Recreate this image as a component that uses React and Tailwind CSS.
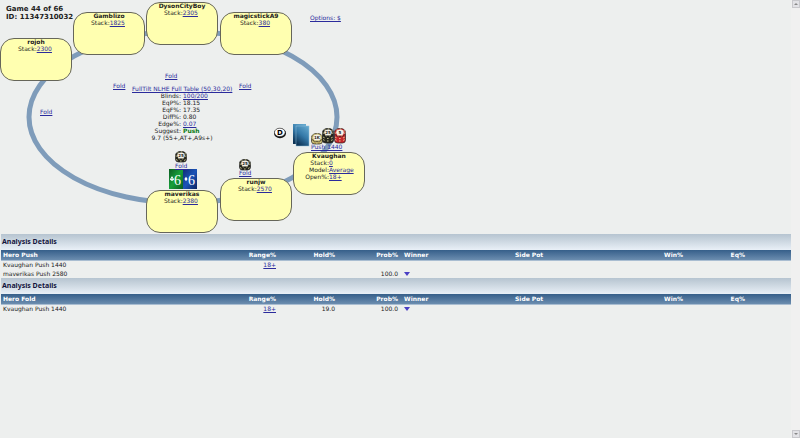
const seats = [
  { name: "rojoh", pos: "left-0 top-[38px]", rows: [["Stack:", "2300"]] },
  { name: "Gamblizo", pos: "left-[73px] top-3", rows: [["Stack:", "1825"]] },
  { name: "DysonCityBoy", pos: "left-[146px] top-0.5", rows: [["Stack:", "2305"]] },
  { name: "magicstickA9", pos: "left-[220px] top-3", rows: [["Stack:", "380"]] },
  { name: "Kvaughan", pos: "left-[293px] top-[152px]", rows: [["Stack:", "0"], ["Model:", "Average"], ["Open%:", "18+"]] },
  { name: "runjw", pos: "left-[220px] top-[178px]", rows: [["Stack:", "2570"]] },
  { name: "maverikas", pos: "left-[146px] top-[190px]", rows: [["Stack:", "2380"]] },
]

const actions = [
  { label: "Fold", pos: "left-[40px] top-[108px]" },
  { label: "Fold", pos: "left-[113px] top-[82px]" },
  { label: "Fold", pos: "left-[165px] top-[72px]" },
  { label: "Fold", pos: "left-[239px] top-[82px]" },
  { label: "Push 1440", pos: "left-[311px] top-[143px]" },
  { label: "Fold", pos: "left-[239px] top-[169px]" },
  { label: "Fold", pos: "left-[175px] top-[162px]" },
]

const stats = [
  ["Blinds:", "100/200", "link"],
  ["EqP%:", "18.15"],
  ["EqF%:", "17.35"],
  ["Diff%:", "0.80"],
  ["Edge%:", "0.07", "link"],
  ["Suggest:", "Push", "good"],
]

const tables = [
  {
    hero: "Hero Push",
    rows: [
      { action: "Kvaughan Push 1440", range: "18+" },
      { action: "maverikas Push 2580", prob: "100.0" },
    ],
  },
  {
    hero: "Hero Fold",
    rows: [{ action: "Kvaughan Push 1440", range: "18+", hold: "19.0", prob: "100.0" }],
  },
]

function Link({ children, className = "" }) {
  return <a href="#" className={`text-[#2b2b9c] underline ${className}`}>{children}</a>
}

function Seat({ name, pos, rows }) {
  return (
    <div className={`absolute ${pos} h-[43px] w-[72px] rounded-[14px] border border-[#66665a] bg-[#ffffb0] text-center`}>
      <div className="font-bold leading-[6px]">{name}</div>
      {rows.length === 1 ? (
        <div className="pr-0.5 leading-[7px]">{rows[0][0]}<Link>{rows[0][1]}</Link></div>
      ) : (
        rows.map(([label, value]) => (
          <div key={label} className="flex leading-[7px]">
            <span className="w-[35px] text-right">{label}</span>
            <Link>{value}</Link>
          </div>
        ))
      )}
    </div>
  )
}

function ChipStack({ pos, color, label, tall }) {
  return (
    <svg className={`absolute ${pos}`} width="12" height={tall ? 16 : 12} viewBox={tall ? "0 0 12 16" : "0 0 12 12"}>
      <rect x="0.5" y="4" width="11" height={tall ? 11 : 7} rx="3" fill={color} stroke="#222" strokeWidth="0.7" />
      {(tall ? [9, 11.5] : [8.5]).map((y) => (
        <path key={y} d={`M1 ${y}q5 3 10 0`} fill="none" stroke="#e8e4a0" strokeWidth="0.9" strokeDasharray="1.6 2.6" />
      ))}
      <ellipse cx="6" cy="4.5" rx="5.6" ry="4.2" fill={color} stroke="#222" strokeWidth="0.6" />
      <ellipse cx="6" cy="4.5" rx="4.9" ry="3.6" fill="none" stroke="#e8e4a0" strokeWidth="0.8" strokeDasharray="1.5 2.4" />
      <ellipse cx="6" cy="4.5" rx="3.8" ry="2.9" fill="#f4f2e8" />
      <text x="6" y="6" textAnchor="middle" fontSize="4" fontWeight="bold" fill="#222">{label}</text>
    </svg>
  )
}

function PokerTable() {
  return (
    <div className="relative h-[234px] leading-[7px]">
      <svg className="absolute left-0 top-0" width="366" height="234" viewBox="0 0 366 234">
        <ellipse cx="183" cy="117" rx="154" ry="86" fill="none" stroke="#7f9cba" strokeWidth="5" />
      </svg>

      <div className="absolute left-1.5 top-[5px] text-[7px] font-bold leading-[8px]">
        <div>Game 44 of 66</div>
        <div>ID: 11347310032</div>
      </div>
      <Link className="absolute left-[310px] top-[14px]">Options: $</Link>

      {seats.map((seat) => (
        <Seat key={seat.name} {...seat} />
      ))}

      <div className="absolute left-[132px] top-[85px] w-[100px] whitespace-nowrap">
        <Link>FullTilt NLHE Full Table (50,30,20)</Link>
        {stats.map(([label, value, kind]) => (
          <div key={label} className="flex gap-0.5">
            <span className="w-[49px] text-right">{label}</span>
            {kind === "link" ? <Link>{value}</Link> : (
              <span className={kind === "good" ? "font-bold text-[#087a12]" : ""}>{value}</span>
            )}
          </div>
        ))}
        <div className="text-center">9.7 (55+,AT+,A9s+)</div>
      </div>

      {/* dealer button */}
      <svg className="absolute left-[273px] top-[127px]" width="14" height="12" viewBox="0 0 14 12">
        <ellipse cx="7" cy="6.3" rx="6" ry="5" fill="#111" />
        <ellipse cx="6.8" cy="5.4" rx="5.3" ry="4.2" fill="#fff" stroke="#333" strokeWidth="0.6" />
        <text x="6.8" y="8" textAnchor="middle" fontSize="7" fontWeight="bold" fill="#000">D</text>
      </svg>

      {/* face down cards */}
      <svg className="absolute left-[292px] top-[123px]" width="18" height="24" viewBox="0 0 18 24">
        <defs>
          <linearGradient id="back" x1="0.8" y1="0" x2="0.3" y2="1">
            <stop offset="0" stopColor="#62a6cc" />
            <stop offset="0.5" stopColor="#3579a8" />
            <stop offset="1" stopColor="#0e3456" />
          </linearGradient>
        </defs>
        <rect x="1" y="1" width="13" height="20" fill="url(#back)" />
        <rect x="4" y="3" width="13" height="20" fill="url(#back)" stroke="#8fc0dc" strokeWidth="0.5" />
      </svg>

      <ChipStack pos="left-[311px] top-[133px]" color="#b8a45c" label="1K" />
      <ChipStack pos="left-[322px] top-[128px]" color="#27271f" label="25" tall />
      <ChipStack pos="left-[334px] top-[128px]" color="#c8262c" label="5" tall />
      <ChipStack pos="left-[175px] top-[151px]" color="#27271f" label="25" />
      <ChipStack pos="left-[239px] top-[159px]" color="#27271f" label="25" />

      {/* maverikas hole cards */}
      <svg className="absolute left-[169px] top-[169px]" width="28" height="20" viewBox="0 0 28 20">
        <defs>
          <linearGradient id="club" x1="0" y1="0" x2="1" y2="1">
            <stop offset="0" stopColor="#0b5c22" />
            <stop offset="0.5" stopColor="#18a03a" />
            <stop offset="1" stopColor="#0c5a20" />
          </linearGradient>
          <linearGradient id="diamond" x1="0" y1="0" x2="1" y2="1">
            <stop offset="0" stopColor="#102c74" />
            <stop offset="0.5" stopColor="#1c54b8" />
            <stop offset="1" stopColor="#0c2360" />
          </linearGradient>
        </defs>
        <rect width="14" height="20" fill="url(#club)" />
        <rect x="14" width="14" height="20" fill="url(#diamond)" />
        <g fill="#fff">
          <g>
            <circle cx="3" cy="8.6" r="1" />
            <circle cx="2" cy="10.2" r="1" />
            <circle cx="4" cy="10.2" r="1" />
            <path d="M3 9.5l0.8 2.6H2.2z" />
          </g>
          <path d="M17 7.8l1.6 2.2-1.6 2.2-1.6-2.2z" />
          <text x="5" y="16" fontFamily="Liberation Serif, serif" fontSize="14">6</text>
          <text x="19" y="16" fontFamily="Liberation Serif, serif" fontSize="14">6</text>
        </g>
      </svg>

      {actions.map((a) => (
        <Link key={a.pos} className={`absolute ${a.pos} whitespace-nowrap`}>{a.label}</Link>
      ))}
    </div>
  )
}

function AnalysisTable({ hero, rows }) {
  return (
    <section>
      <h2 className="h-4 bg-linear-to-b from-[#b6c4d0] to-[#e9f0f7] px-px font-['Noto_Sans',sans-serif] text-[7px] font-bold leading-[16px] text-[#14143c]">
        Analysis Details
      </h2>
      <table className="w-full table-fixed border-separate border-spacing-0 text-left">
        <colgroup>
          <col className="w-[218px]" />
          <col className="w-[59px]" />
          <col className="w-[59px]" />
          <col className="w-[63px]" />
          <col className="w-[113px]" />
          <col className="w-[110px]" />
          <col className="w-[62px]" />
          <col className="w-[62px]" />
          <col />
        </colgroup>
        <thead className="bg-linear-to-b from-[#365f8a] to-[#7192b3] text-white">
          <tr className="h-[11px] leading-[10px] *:border-b *:border-[#a9bdd1] *:px-0.5">
            <th>{hero}</th>
            <th className="text-right">Range%</th>
            <th className="text-right">Hold%</th>
            <th className="text-right">Prob%</th>
            <th>&nbsp;Winner</th>
            <th>Side Pot</th>
            <th className="text-right">Win%</th>
            <th className="text-right">Eq%</th>
            <th></th>
          </tr>
        </thead>
        <tbody>
          {rows.map((row) => (
            <tr key={row.action} className="leading-[8px] *:px-0.5 not-first:*:pt-px">
              <td>{row.action}</td>
              <td className="text-right">{row.range && <Link>{row.range}</Link>}</td>
              <td className="text-right">{row.hold}</td>
              <td className="text-right">{row.prob}</td>
              <td>
                {row.prob && (
                  <button aria-label="Show winners" className="ml-0.5 block">
                    <svg width="6" height="4" viewBox="0 0 6 4" fill="#4a3fc4"><path d="M0 0h6L3 4z" /></svg>
                  </button>
                )}
              </td>
              <td colSpan={4}></td>
            </tr>
          ))}
        </tbody>
      </table>
    </section>
  )
}

export default function App() {
  return (
    <div className="flex min-h-screen bg-[#edefee] font-['DejaVu_Sans',Verdana,sans-serif] text-[6px] text-[#222]">
      <main className="min-w-0 flex-1">
        <PokerTable />
        <div className="pl-px">
          {tables.map((t) => (
            <AnalysisTable key={t.hero} {...t} />
          ))}
        </div>
      </main>
      <div className="flex w-[9px] flex-col items-end justify-between bg-[#f0f0f0]">
        <button aria-label="Scroll up" className="flex size-2 items-center justify-center border border-[#c8c8cc] bg-[#e2e2e6]">
          <svg width="4" height="2" viewBox="0 0 4 2" fill="#888"><path d="M2 0l2 2H0z" /></svg>
        </button>
        <button aria-label="Scroll down" className="flex size-2 items-center justify-center border border-[#c8c8cc] bg-[#e2e2e6]">
          <svg width="4" height="2" viewBox="0 0 4 2" fill="#888"><path d="M0 0h4L2 2z" /></svg>
        </button>
      </div>
    </div>
  )
}
